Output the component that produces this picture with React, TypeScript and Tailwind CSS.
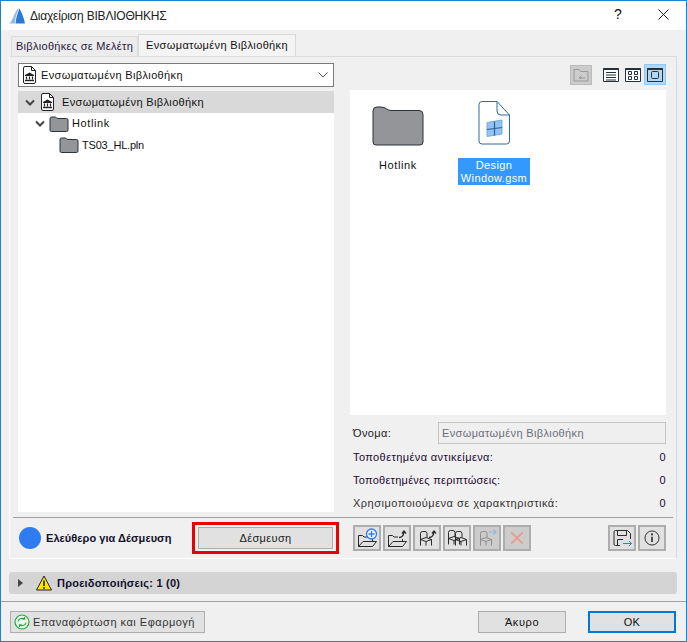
import React from "react";

const LibDoc = ({ className = "" }: { className?: string }) => (
  <svg viewBox="0 0 13 18" className={className} fill="none">
    <path d="M2 .5H8.500L12.500 4.500V16a1.500 1.500 0 0 1-1.500 1.500H2A1.500 1.500 0 0 1 .5 16V2A1.500 1.500 0 0 1 2 .5Z" fill="#fff" stroke="#222" />
    <path d="M8.500 .5V4.500H12.500" stroke="#222" />
    <path d="M6.500 6.500 2 9v1h9V9Z" fill="#222" />
    <path d="M3.500 10.500v3M6.500 10.500v3M9.500 10.500v3" stroke="#222" strokeWidth="1.200" />
    <path d="M2 14.500h9" stroke="#222" strokeWidth="1.400" />
  </svg>
);

const Folder = ({ className = "" }: { className?: string }) => (
  <svg viewBox="0 0 20 16" className={className}>
    <path d="M1 14V2.500A1.500 1.500 0 0 1 2.500 1H6c1.200 0 1.700 1.500 3 1.500h8.500A1.500 1.500 0 0 1 19 4v10a1.500 1.500 0 0 1-1.500 1.500h-15A1.500 1.500 0 0 1 1 14Z" fill="#939598" stroke="#2b3238" strokeWidth="1" />
  </svg>
);

const Chevron = () => (
  <svg viewBox="0 0 10 7" className="w-[10px] h-[7px] shrink-0">
    <path d="M1 1.500 5 5.500 9 1.500" fill="none" stroke="#444" strokeWidth="2" />
  </svg>
);

const IconButton = ({ children, disabled = false }: { children: React.ReactNode; disabled?: boolean }) => (
  <div className={`w-[28px] h-[26px] border-2 border-[#adadad] flex items-center justify-center ${disabled ? "bg-[#cccccc]" : "bg-[#e1e1e1]"}`}>
    {children}
  </div>
);

const Chair = ({ x, y, stroke = "#2a2a2a" }: { x: number; y: number; stroke?: string }) => (
  <g transform={`translate(${x} ${y})`} fill="none" stroke={stroke} strokeWidth="1">
    <path d="M.5 14.500V2.500A2 2 0 0 1 2.500.5H5A2 2 0 0 1 7 2.500V6.500" />
    <path d="M.5 8.500 6 6.500 11.500 8.500 6 10.500Z" />
    <path d="M11.500 8.500V14.500M6 10.500V14.500" />
  </g>
);

const UpArrow = () => (
  <path d="M14 10.500c3 0 4.500-1.500 5-5.500M17 6.500 19 4l2 2.500" fill="none" stroke="#2a2a2a" strokeWidth="1.300" />
);

const OpenFolder = ({ children }: { children?: React.ReactNode }) => (
  <svg viewBox="0 0 24 22" className="w-[24px] h-[22px]">
    <path d="M3.500 19.500V8.500h4l1.500 1.500h4" fill="none" stroke="#2a2a2a" />
    <path d="M3.500 19.500H17.500L21.500 14.500H8L3.500 19.500Z" fill="none" stroke="#2a2a2a" />
    <path d="M17.500 14.500V12" fill="none" stroke="#2a2a2a" />
    {children}
  </svg>
);

const InfoRow = ({ label, className = "" }: { label: string; className?: string }) => (
  <div className="flex justify-between h-[23px] items-center pl-[3px] text-[#1d0a33]">
    <span className={className}>{label}</span>
    <span>0</span>
  </div>
);

export default function App() {
  return (
    <div className="w-[687px] h-[642px] overflow-hidden flex flex-col bg-[#f0f0f0] border border-[#1883d7] text-[11px] text-[#111] tracking-[0.36px]" style={{ fontFamily: '"Liberation Sans", Arial, sans-serif' }}>
      {/* Title bar */}
      <div className="h-[29px] shrink-0 bg-white flex items-center">
        <svg viewBox="0 0 16 16" className="w-[16px] h-[16px] ml-[8px]">
          <path d="M0 15.500C4 13 5 5 9 .5h1C7 6 6 12 6 15.500Z" fill="#8ebbee" />
          <path d="M6.500 15.500C7 10 8.500 5 10.500.5 13 5 15 10 16 15.500Z" fill="#2d78d6" />
        </svg>
        <span className="ml-[5px] text-[12px] tracking-[-0.2px] text-[#222]">Διαχείριση ΒΙΒΛΙΟΘΗΚΗΣ</span>
        <div className="ml-auto flex items-center pb-[2px]">
          <span className="text-[14px] w-[14px] text-center mr-[33px]">?</span>
          <svg viewBox="0 0 11 11" className="w-[11px] h-[11px] mr-[17px]">
            <path d="M.5.5l10 10M10.500.5l-10 10" stroke="#222" strokeWidth="1" />
          </svg>
        </div>
      </div>

      <div className="flex-1 flex flex-col min-h-0">
        {/* Tabs */}
        <div className="h-[26px] shrink-0 flex items-end pl-[10px]">
          <div className="w-[127px] h-[20px] bg-[#ececec] border border-b-0 border-[#dcdcdc] flex items-center justify-center text-[#2a1a3a] tracking-[0.3px]">Βιβλιοθήκες σε Μελέτη</div>
          <div className="w-[158px] h-[22px] bg-[#f4f4f4] border border-b-0 border-[#d9d9d9] flex items-center justify-center">Ενσωματωμένη Βιβλιοθήκη</div>
        </div>

        {/* Panel */}
        <div className="ml-[8px] w-[668px] h-[503px] shrink-0 border border-l-white border-t-[#dcdcdc] border-r-[#d9d9d9] border-b-white flex flex-col">
          <div className="h-[460px] shrink-0 flex pl-[8px] pr-[9px] pt-[6px]">
            {/* Left */}
            <div className="w-[316px] flex flex-col">
              <div className="h-[24px] bg-white border border-[#7a7a7a] flex items-center pl-[4px] pr-[5px]">
                <LibDoc className="w-[13px] h-[18px]" />
                <span className="ml-[5px]">Ενσωματωμένη Βιβλιοθήκη</span>
                <svg viewBox="0 0 10 6" className="ml-auto w-[10px] h-[6px]">
                  <path d="M.5.5 5 5 9.500.5" fill="none" stroke="#555" />
                </svg>
              </div>
              <div className="mt-[4px] h-[421px] bg-white flex flex-col">
                <div className="h-[22px] bg-[#d9d9d9] flex items-center pl-[7px]">
                  <Chevron />
                  <LibDoc className="ml-[6px] w-[13px] h-[18px]" />
                  <span className="ml-[8px]">Ενσωματωμένη Βιβλιοθήκη</span>
                </div>
                <div className="h-[21px] flex items-center pl-[17px]">
                  <Chevron />
                  <Folder className="ml-[4px] w-[20px] h-[16px]" />
                  <span className="ml-[3px] tracking-[0.6px]">Hotlink</span>
                </div>
                <div className="h-[22px] flex items-center pl-[41px]">
                  <Folder className="w-[20px] h-[16px]" />
                  <span className="ml-[3px] tracking-[-0.2px]">TS03_HL.pln</span>
                </div>
              </div>
            </div>
            {/* Right */}
            <div className="ml-[16px] w-[316px] flex flex-col">
              <div className="h-[23px] flex items-center justify-end">
                <div className="w-[22px] h-[20px] bg-[#cccccc] border border-[#bbbbbb] flex items-center justify-center mr-[8px]">
                  <svg viewBox="0 0 16 14" className="w-[16px] h-[14px]">
                    <path d="M1 13V1.500h5l1.500 2h7.500V13Z" fill="none" stroke="#999" />
                    <path d="M12 10H6.500M8.500 7.500 6 10l2.500 0" fill="none" stroke="#999" />
                  </svg>
                </div>
                <div className="w-[22px] h-[22px] flex items-center justify-center">
                  <svg viewBox="0 0 16 14" className="w-[16px] h-[14px]">
                    <path d="M.5.500h15v13H.5Z" fill="#fff" stroke="#263238" />
                    <path d="M.5 1h15" stroke="#263238" strokeWidth="2" />
                    <path d="M3 4.500h10M3 7h10M3 9.500h10M3 12h10" stroke="#263238" />
                  </svg>
                </div>
                <div className="w-[22px] h-[22px] flex items-center justify-center">
                  <svg viewBox="0 0 16 14" className="w-[16px] h-[14px]">
                    <path d="M.5.500h15v13H.5Z" fill="#fff" stroke="#263238" />
                    <path d="M.5 1h15" stroke="#263238" strokeWidth="2" />
                    <path d="M3.500 3.500h3v3h-3ZM9.500 3.500h3v3h-3ZM3.500 8.500h3v3h-3ZM9.500 8.500h3v3h-3Z" fill="none" stroke="#263238" />
                  </svg>
                </div>
                <div className="w-[22px] h-[21px] bg-[#b3d7f3] border border-[#90c8f6] flex items-center justify-center">
                  <svg viewBox="0 0 16 14" className="w-[16px] h-[14px]">
                    <path d="M.5.500h15v13H.5Z" fill="none" stroke="#263238" />
                    <path d="M.5 1h15" stroke="#263238" strokeWidth="2" />
                    <rect x="4.500" y="3.500" width="7" height="7" rx="1" fill="none" stroke="#263238" />
                  </svg>
                </div>
              </div>
              <div className="mt-[4px] h-[325px] bg-white flex items-start">
                <div className="w-[72px] ml-[12px] mt-[15px] flex flex-col items-center">
                  <svg viewBox="0 0 52 42" className="w-[52px] h-[42px]">
                    <path d="M1 37V6a4 4 0 0 1 4-4h4c5 0 6 3.500 10 3.500h28a4 4 0 0 1 4 4V37a3 3 0 0 1-3 3H4a3 3 0 0 1-3-3Z" fill="#939598" stroke="#2b3238" strokeWidth="1" />
                  </svg>
                  <span className="mt-[12px] leading-[13px] tracking-[0.6px]">Hotlink</span>
                </div>
                <div className="ml-[24px] mt-[11px] w-[72px] flex flex-col items-center">
                  <svg viewBox="0 0 32 44" className="w-[32px] h-[44px]">
                    <path d="M4 .5H19L31.500 14V40A3 3 0 0 1 28.500 43H4A3 3 0 0 1 1 40V3.500A3 3 0 0 1 4 .5Z" fill="#fff" stroke="#2f6ba6" />
                    <path d="M19 .5V10a4 4 0 0 0 4 4h8.500" fill="none" stroke="#2f6ba6" />
                    <path d="M9 21.500 24 19V33L9 35.500Z" fill="#90c4f5" stroke="#7fa9d0" />
                    <path d="M16.500 20.500V34.500M9 28.500l15-2" stroke="#2f5f90" strokeWidth="1.200" />
                  </svg>
                  <div className="mt-[13px] w-[72px] h-[27px] bg-[#3399ff] text-white text-center leading-[13px] pt-[1px] tracking-[0.4px]">
                    Design<br />Window.gsm
                  </div>
                </div>
              </div>
              <div className="mt-[7px] h-[22px] flex items-center pl-[3px]">
                <span className="w-[85px] text-[#222]">Όνομα:</span>
                <div className="w-[228px] h-[22px] bg-[#efefef] border border-[#c4c4c4] flex items-center pl-[3px] text-[#6d6d7a]">Ενσωματωμένη Βιβλιοθήκη</div>
              </div>
              <div className="mt-[2px] flex flex-col">
                <InfoRow label="Τοποθετημένα αντικείμενα:" className="tracking-[0.4px]" />
                <InfoRow label="Τοποθετημένες περιπτώσεις:" className="tracking-[0.26px]" />
                <InfoRow label="Χρησιμοποιούμενα σε χαρακτηριστικά:" className="tracking-[0.5px] text-[#333]" />
              </div>
            </div>
          </div>

          {/* Action bar */}
          <div className="mx-[3px] h-[1px] shrink-0 bg-[#a0a0a0]" />
          <div className="flex-1 flex items-center pl-[9px] pr-[10px]">
            <div className="w-[22px] h-[22px] rounded-full bg-[#2f7bf0] shrink-0" />
            <span className="ml-[5px] w-[126px] shrink-0 font-bold text-[#10102a] tracking-[0.05px] whitespace-nowrap">Ελεύθερο για Δέσμευση</span>
            <div className="ml-[20px] w-[147px] h-[32px] border-[3px] border-[#ee0000] flex items-center justify-center">
              <div className="w-[135px] h-[22px] bg-[#e1e1e1] border border-[#adadad] flex items-center justify-center text-[#222]">Δέσμευση</div>
            </div>
            <div className="ml-[14px] flex gap-[2px]">
              <IconButton>
                <OpenFolder>
                  <circle cx="16.500" cy="7" r="5" fill="#eef4ff" stroke="#2f7bf0" strokeWidth="1.300" />
                  <path d="M16.500 4v6M13.500 7h6" stroke="#2f7bf0" strokeWidth="1.300" />
                </OpenFolder>
              </IconButton>
              <IconButton>
                <OpenFolder>
                  <UpArrow />
                </OpenFolder>
              </IconButton>
              <IconButton>
                <svg viewBox="0 0 24 22" className="w-[24px] h-[22px]">
                  <Chair x={5} y={4} />
                  <UpArrow />
                </svg>
              </IconButton>
              <IconButton>
                <svg viewBox="0 0 24 22" className="w-[24px] h-[22px]">
                  <Chair x={3} y={3} />
                  <Chair x={10} y={4} />
                </svg>
              </IconButton>
              <IconButton disabled>
                <svg viewBox="0 0 24 22" className="w-[24px] h-[22px]">
                  <Chair x={5} y={4} stroke="#8f8f8f" />
                  <path d="M14 5h7M18.500 2.500 21 5l-2.500 2.500" fill="none" stroke="#8fb8f0" strokeWidth="1.200" />
                </svg>
              </IconButton>
              <IconButton disabled>
                <svg viewBox="0 0 16 16" className="w-[14px] h-[14px]">
                  <path d="M1.500 1.500l13 13M14.500 1.500l-13 13" stroke="#ee9a88" strokeWidth="2" />
                </svg>
              </IconButton>
            </div>
            <div className="ml-auto flex gap-[2px]">
              <IconButton>
                <svg viewBox="0 0 24 22" className="w-[24px] h-[22px]">
                  <path d="M10 18.500H5.500A1.500 1.500 0 0 1 4 17V5A1.500 1.500 0 0 1 5.500 3.500H17.500L20.500 6.500V12" fill="none" stroke="#2a2a2a" />
                  <path d="M7.500 3.500V8.500H16.500V3.500M7.500 18.500V12.500H13" fill="none" stroke="#2a2a2a" />
                  <path d="M13 16.500H21.500M19 14 21.500 16.500 19 19" fill="none" stroke="#2f7bf0" />
                </svg>
              </IconButton>
              <IconButton>
                <svg viewBox="0 0 20 20" className="w-[16px] h-[16px]">
                  <circle cx="10" cy="10" r="8.800" fill="none" stroke="#2a2a2a" strokeWidth="1.200" />
                  <path d="M10 8.500V15" fill="none" stroke="#2a2a2a" strokeWidth="2" />
                  <circle cx="10" cy="5.500" r="1.300" fill="#2a2a2a" />
                </svg>
              </IconButton>
            </div>
          </div>
        </div>

        {/* Warnings */}
        <div className="ml-[8px] mt-[13px] w-[668px] h-[22px] shrink-0 bg-[#d4d4d4] rounded-[3px] flex items-center">
          <svg viewBox="0 0 5 8" className="ml-[9px] w-[5px] h-[8px]">
            <path d="M0 0l5 4-5 4Z" fill="#444" />
          </svg>
          <svg viewBox="0 0 16 16" className="ml-[13px] w-[16px] h-[16px]">
            <path d="M8 1 15.500 15H.5Z" fill="#ffe600" stroke="#222" strokeWidth="1" strokeLinejoin="round" />
            <path d="M8 5.500V11" stroke="#222" strokeWidth="1.600" />
            <circle cx="8" cy="13" r="1" fill="#222" />
          </svg>
          <span className="ml-[5px] font-bold text-[#10102a] tracking-[0.22px]">Προειδοποιήσεις: 1 (0)</span>
        </div>

        <div className="mt-[7px] h-[1px] shrink-0 bg-[#a0a0a0]" />

        {/* Footer */}
        <div className="h-[39px] shrink-0 flex items-start pt-[9px] pl-[9px]">
          <div className="w-[195px] h-[22px] bg-[#e1e1e1] border border-[#adadad] flex items-center pl-[3px] text-[#333]">
            <svg viewBox="0 0 16 16" className="w-[16px] h-[16px]">
              <circle cx="8" cy="8" r="7" fill="#e8f6e8" stroke="#27a844" strokeWidth="1.200" />
              <path d="M4 7.500C4.500 5 7.500 3.500 10.500 5M10.500 3v2.200H8.300M12 8.500C11.500 11 8.500 12.500 5.500 11M5.500 13v-2.200h2.200" fill="none" stroke="#27a844" strokeWidth="1.200" />
            </svg>
            <span className="ml-[3px] tracking-[0.5px]">Επαναφόρτωση και Εφαρμογή</span>
          </div>
          <div className="ml-[273px] w-[88px] h-[22px] bg-[#e1e1e1] border border-[#adadad] flex items-center justify-center tracking-[0.6px]">Άκυρο</div>
          <div className="ml-[22px] w-[88px] h-[22px] bg-[#e1e1e1] border-2 border-[#0078d7] flex items-center justify-center">OK</div>
        </div>
      </div>
    </div>
  );
}
